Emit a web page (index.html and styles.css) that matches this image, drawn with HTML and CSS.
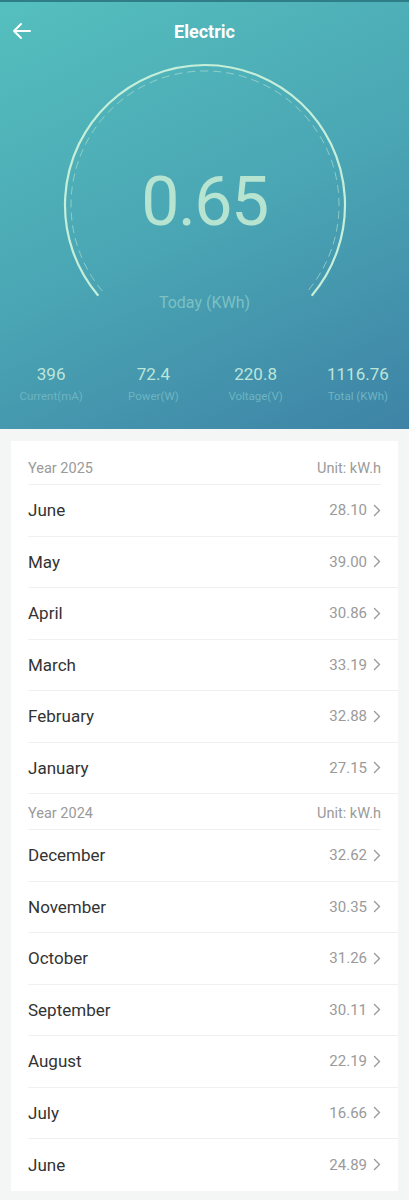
FILE: index.html
```html
<!DOCTYPE html>
<html lang="en">
	<head>
		<meta charset="UTF-8" />
		<meta name="viewport" content="width=device-width, initial-scale=1.0" />
		<title>Electric</title>
		<link rel="stylesheet" href="styles.css">
	</head>
	<body>
		<header class="hero">
			<div class="topbar">
				<svg class="back" width="20" height="18" viewBox="0 0 20 18">
					<path d="M18 9H2M9 2L2 9l7 7" fill="none" stroke="#fff" stroke-width="2" stroke-linecap="round" stroke-linejoin="round" />
				</svg>
				<h1>Electric</h1>
			</div>
			<div class="gauge">
				<svg class="gauge-arc" width="288" height="262" viewBox="0 0 288 262">
					<path d="M36.75 233 A140 140 0 1 1 251.25 233" fill="none" stroke="#c6efda" stroke-width="2.2" stroke-linecap="round" />
					<path d="M41.35 229.1 A134 134 0 1 1 246.65 229.1" fill="none" stroke="#a9dcd0" stroke-opacity="0.7" stroke-width="1" stroke-dasharray="8 5" />
				</svg>
				<div class="today-value">0.65</div>
				<div class="today-label">Today (KWh)</div>
			</div>
			<div class="stats">
				<div class="stat">
					<span class="stat-value">396</span>
					<span class="stat-label">Current(mA)</span>
				</div>
				<div class="stat">
					<span class="stat-value">72.4</span>
					<span class="stat-label">Power(W)</span>
				</div>
				<div class="stat">
					<span class="stat-value">220.8</span>
					<span class="stat-label">Voltage(V)</span>
				</div>
				<div class="stat">
					<span class="stat-value">1116.76</span>
					<span class="stat-label">Total (KWh)</span>
				</div>
			</div>
		</header>

		<section class="card" id="history"></section>

		<script>
			const years = [
				{
					year: 2025,
					months: [
						["June", "28.10"],
						["May", "39.00"],
						["April", "30.86"],
						["March", "33.19"],
						["February", "32.88"],
						["January", "27.15"],
					],
				},
				{
					year: 2024,
					months: [
						["December", "32.62"],
						["November", "30.35"],
						["October", "31.26"],
						["September", "30.11"],
						["August", "22.19"],
						["July", "16.66"],
						["June", "24.89"],
					],
				},
			];

			const chevron =
				'<svg class="chevron" width="8" height="13" viewBox="0 0 8 13"><path d="M1.5 1.5l5 5-5 5" fill="none" stroke="#9a9a9a" stroke-width="1.4" stroke-linecap="round" stroke-linejoin="round"/></svg>';

			const card = document.getElementById("history");
			years.forEach((group) => {
				const head = document.createElement("div");
				head.className = "year-head";
				head.innerHTML =
					"<span>Year " + group.year + "</span><span>Unit: kW.h</span>";
				card.appendChild(head);

				group.months.forEach(([name, value]) => {
					const row = document.createElement("div");
					row.className = "month-row";
					row.innerHTML =
						'<span class="month-name">' + name + "</span>" +
						'<span class="month-value">' + value + chevron + "</span>";
					card.appendChild(row);
				});
			});
		</script>
	</body>
</html>
```

FILE: styles.css
```css
body {
	margin: 0;
	background: #f4f5f5;
	font-family: Roboto, "Noto Sans", sans-serif;
}
.hero {
	height: 427px;
	border-top: 2px solid #2f7d86;
	background: linear-gradient(155deg, #55bfbe 0%, #4aa6b4 50%, #3e83a6 100%);
	color: #fff;
}
.topbar {
	position: relative;
	height: 60px;
	display: flex;
	align-items: center;
	justify-content: center;
}
.back {
	position: absolute;
	left: 12px;
	top: 20px;
}
h1 {
	margin: 0 0 2px;
	font-size: 18px;
	font-weight: 700;
}
.gauge {
	position: relative;
	width: 288px;
	height: 262px;
	margin: 0 auto;
	display: flex;
	flex-direction: column;
	align-items: center;
}
.gauge-arc {
	position: absolute;
	left: 0;
	top: 0;
}
.today-value {
	margin-top: 100px;
	font-size: 68px;
	line-height: 80px;
	letter-spacing: -1.5px;
	color: #b7e4d1;
}
.today-label {
	margin-top: 51px;
	font-size: 16px;
	color: #7cc1c4;
}
.stats {
	display: grid;
	grid-template-columns: repeat(4, 1fr);
	margin-top: 39px;
}
.stat {
	display: flex;
	flex-direction: column;
	align-items: center;
}
.stat-value {
	font-size: 17px;
	line-height: 22px;
	color: #bce6da;
}
.stat-label {
	font-size: 11.5px;
	line-height: 22px;
	color: #6db4c2;
}
.card {
	margin: 12px 11px 0;
	padding-top: 8px;
	background: #fff;
}
.year-head {
	height: 36px;
	margin: 0 17px;
	padding-top: 4px;
	box-sizing: border-box;
	display: flex;
	align-items: center;
	justify-content: space-between;
	border-bottom: 1px solid #f0f0f0;
	font-size: 14.5px;
	color: #9a9a9a;
}
.month-row {
	height: 51.5px;
	margin-left: 17px;
	padding-right: 17px;
	box-sizing: border-box;
	display: flex;
	align-items: center;
	justify-content: space-between;
	border-bottom: 1px solid #f0f0f0;
}
.month-row:last-child {
	border-bottom: none;
}
.month-name {
	font-size: 17px;
	color: #333;
}
.month-value {
	display: flex;
	align-items: center;
	gap: 6px;
	font-size: 15px;
	color: #9a9a9a;
}
```
